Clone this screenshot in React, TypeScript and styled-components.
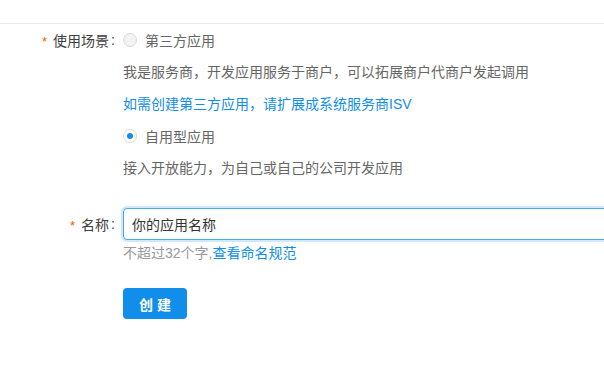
import React from "react";
import styled, { createGlobalStyle } from "styled-components";

const Global = createGlobalStyle`
  html, body { margin: 0; padding: 0; background: #fff; overflow: hidden; }
  body { font-family: "Liberation Sans", "Noto Sans CJK SC", sans-serif; font-size: 14px; color: #333; }
`;

const Page = styled.div`
  width: 604px;
  height: 377px;
  overflow: hidden;
`;

const Header = styled.div`
  height: 23px;
  border-bottom: 1px solid #e9e9e9;
`;

const Form = styled.form`
  display: flex;
  flex-direction: column;
`;

const Item = styled.div<{ $mb?: number }>`
  display: flex;
  align-items: flex-start;
  margin-bottom: ${(p) => p.$mb ?? 0}px;
`;

const Label = styled.label<{ $lh?: number }>`
  width: 123px;
  flex: none;
  display: flex;
  justify-content: flex-end;
  align-items: center;
  height: ${(p) => p.$lh ?? 32}px;
  color: #404040;
  white-space: nowrap;
`;

const Star = styled.span`
  color: #f55a00;
  margin-right: 6px;
  font-family: "Liberation Sans", sans-serif;
  font-size: 13px;
  position: relative;
  top: 1px;
`;

const Colon = styled.span`
  margin: 0 8px 0 2px;
  color: #404040;
`;

const Control = styled.div`
  display: flex;
  flex-direction: column;
  min-width: 0;
  flex: 1;
`;

const RadioRow = styled.label`
  display: flex;
  align-items: center;
  height: 32px;
  color: #666;
  white-space: nowrap;
`;

const RadioDot = styled.span<{ $checked?: boolean }>`
  width: 14px;
  height: 14px;
  box-sizing: border-box;
  border-radius: 50%;
  border: 1px solid #d9d9d9;
  background: ${(p) => (p.$checked ? "#fff" : "#f3f3f3")};
  display: flex;
  align-items: center;
  justify-content: center;
  margin-right: 8px;
  flex: none;
  &::after {
    content: "";
    display: ${(p) => (p.$checked ? "block" : "none")};
    width: 6px;
    height: 6px;
    border-radius: 50%;
    background: #108ee9;
  }
`;

const Line = styled.div<{ $link?: boolean }>`
  height: 32px;
  line-height: 32px;
  color: ${(p) => (p.$link ? "#108ee9" : "#666")};
  white-space: nowrap;
`;

const Input = styled.input`
  width: 520px;
  height: 32px;
  box-sizing: border-box;
  border: 1px solid #49a9ee;
  border-radius: 4px;
  box-shadow: 0 0 0 2px rgba(16, 142, 233, 0.2);
  padding: 0 8px;
  font: inherit;
  font-size: 14px;
  color: #333;
  outline: none;
  background: #fff;
`;

const Help = styled.div`
  margin-top: 1px;
  height: 24px;
  line-height: 24px;
  color: #999;
  white-space: nowrap;
`;

const Link = styled.a`
  color: #108ee9;
  text-decoration: none;
`;

const Button = styled.button`
  width: 64px;
  height: 31px;
  border: none;
  border-radius: 4px;
  background: #108ee9;
  color: #fff;
  font: inherit;
  font-size: 14px;
  font-weight: bold;
  letter-spacing: 4px;
  text-indent: 4px;
  padding: 0;
  cursor: pointer;
`;

export default function App() {
  return (
    <Page>
      <Global />
      <Header />
      <Form onSubmit={(e) => e.preventDefault()}>
        <Item $mb={24}>
          <Label>
            <Star>*</Star>使用场景<Colon>:</Colon>
          </Label>
          <Control>
            <RadioRow>
              <RadioDot />
              第三方应用
            </RadioRow>
            <Line>我是服务商，开发应用服务于商户，可以拓展商户代商户发起调用</Line>
            <Line $link>如需创建第三方应用，请扩展成系统服务商ISV</Line>
            <RadioRow>
              <RadioDot $checked />
              自用型应用
            </RadioRow>
            <Line>接入开放能力，为自己或自己的公司开发应用</Line>
          </Control>
        </Item>
        <Item $mb={23}>
          <Label>
            <Star>*</Star>名称<Colon>:</Colon>
          </Label>
          <Control>
            <Input defaultValue="你的应用名称" />
            <Help>
              不超过32个字,<Link href="#">查看命名规范</Link>
            </Help>
          </Control>
        </Item>
        <Item>
          <Label />
          <Control>
            <div>
              <Button type="submit">创建</Button>
            </div>
          </Control>
        </Item>
      </Form>
    </Page>
  );
}
